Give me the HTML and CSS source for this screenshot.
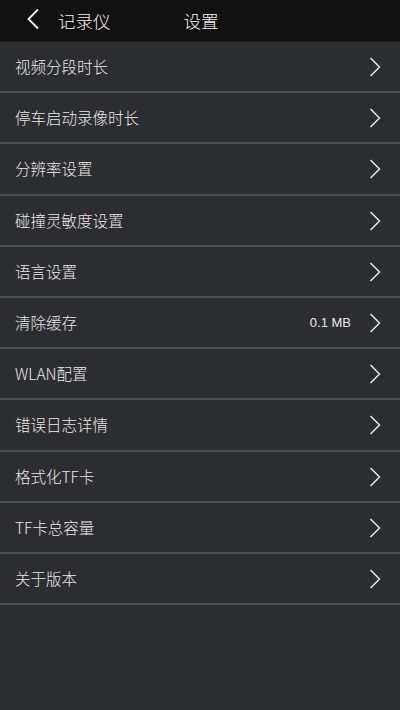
FILE: index.html
```html
<!DOCTYPE html>
<html lang="zh">
<head>
<meta charset="utf-8">
<link rel="stylesheet" href="styles.css">
</head>
<body>
<div class="app">
  <header class="topbar">
    <svg class="back" width="14" height="22" viewBox="0 0 14 22"><path d="M12 1.5 L2.5 11 L12 20.5" fill="none" stroke="#f0f0f0" stroke-width="1.8"/></svg>
    <span class="app-name">记录仪</span>
    <span class="title">设置</span>
  </header>
  <ul class="list">
    <li class="row"><span class="label">视频分段时长</span><svg class="chev" viewBox="0 0 12 20"><path d="M1.5 1 L10.5 10 L1.5 19" fill="none" stroke="#e6e6e6" stroke-width="1.5"/></svg></li>
    <li class="row"><span class="label">停车启动录像时长</span><svg class="chev" viewBox="0 0 12 20"><path d="M1.5 1 L10.5 10 L1.5 19" fill="none" stroke="#e6e6e6" stroke-width="1.5"/></svg></li>
    <li class="row"><span class="label">分辨率设置</span><svg class="chev" viewBox="0 0 12 20"><path d="M1.5 1 L10.5 10 L1.5 19" fill="none" stroke="#e6e6e6" stroke-width="1.5"/></svg></li>
    <li class="row"><span class="label">碰撞灵敏度设置</span><svg class="chev" viewBox="0 0 12 20"><path d="M1.5 1 L10.5 10 L1.5 19" fill="none" stroke="#e6e6e6" stroke-width="1.5"/></svg></li>
    <li class="row"><span class="label">语言设置</span><svg class="chev" viewBox="0 0 12 20"><path d="M1.5 1 L10.5 10 L1.5 19" fill="none" stroke="#e6e6e6" stroke-width="1.5"/></svg></li>
    <li class="row"><span class="label">清除缓存</span><span class="value">0.1 MB</span><svg class="chev" viewBox="0 0 12 20"><path d="M1.5 1 L10.5 10 L1.5 19" fill="none" stroke="#e6e6e6" stroke-width="1.5"/></svg></li>
    <li class="row"><span class="label">WLAN配置</span><svg class="chev" viewBox="0 0 12 20"><path d="M1.5 1 L10.5 10 L1.5 19" fill="none" stroke="#e6e6e6" stroke-width="1.5"/></svg></li>
    <li class="row"><span class="label">错误日志详情</span><svg class="chev" viewBox="0 0 12 20"><path d="M1.5 1 L10.5 10 L1.5 19" fill="none" stroke="#e6e6e6" stroke-width="1.5"/></svg></li>
    <li class="row"><span class="label">格式化TF卡</span><svg class="chev" viewBox="0 0 12 20"><path d="M1.5 1 L10.5 10 L1.5 19" fill="none" stroke="#e6e6e6" stroke-width="1.5"/></svg></li>
    <li class="row"><span class="label">TF卡总容量</span><svg class="chev" viewBox="0 0 12 20"><path d="M1.5 1 L10.5 10 L1.5 19" fill="none" stroke="#e6e6e6" stroke-width="1.5"/></svg></li>
    <li class="row"><span class="label">关于版本</span><svg class="chev" viewBox="0 0 12 20"><path d="M1.5 1 L10.5 10 L1.5 19" fill="none" stroke="#e6e6e6" stroke-width="1.5"/></svg></li>
  </ul>
</div>
</body>
</html>
```
FILE: styles.css
```css
html, body {
  margin: 0;
  padding: 0;
  background: #2c2d30;
  font-family: "Noto Sans CJK SC", "Noto Sans", sans-serif;
}
.app {
  width: 400px;
  height: 710px;
  background: #2c2d30;
  overflow: hidden;
}
.topbar {
  height: 41px;
  background: #111111;
  border-bottom: 1px solid #1d1e20;
  display: flex;
  align-items: center;
  color: #f2f2f2;
}
.back {
  margin-left: 26px;
  margin-top: -4px;
}
.app-name {
  margin-left: 18px;
  font-size: 17.5px;
  font-weight: 300;
  margin-top: -1px;
}
.title {
  margin-left: 73px;
  font-size: 17.5px;
  font-weight: 300;
  margin-top: -1px;
}
.list {
  list-style: none;
  margin: 0;
  padding: 0;
}
.row {
  height: 49.2px;
  border-bottom: 2px solid #4d4e51;
  display: flex;
  align-items: center;
  padding: 0 19px 0 15px;
  color: #e9e9e9;
}
.label {
  flex: 1;
  font-size: 15.5px;
  font-weight: 300;
  margin-top: -1px;
}
.value {
  font-family: "Liberation Sans", Arial, sans-serif;
  font-size: 13px;
  margin-right: 18px;
}
.chev {
  width: 12px;
  height: 20px;
  margin-top: 1px;
}
```
